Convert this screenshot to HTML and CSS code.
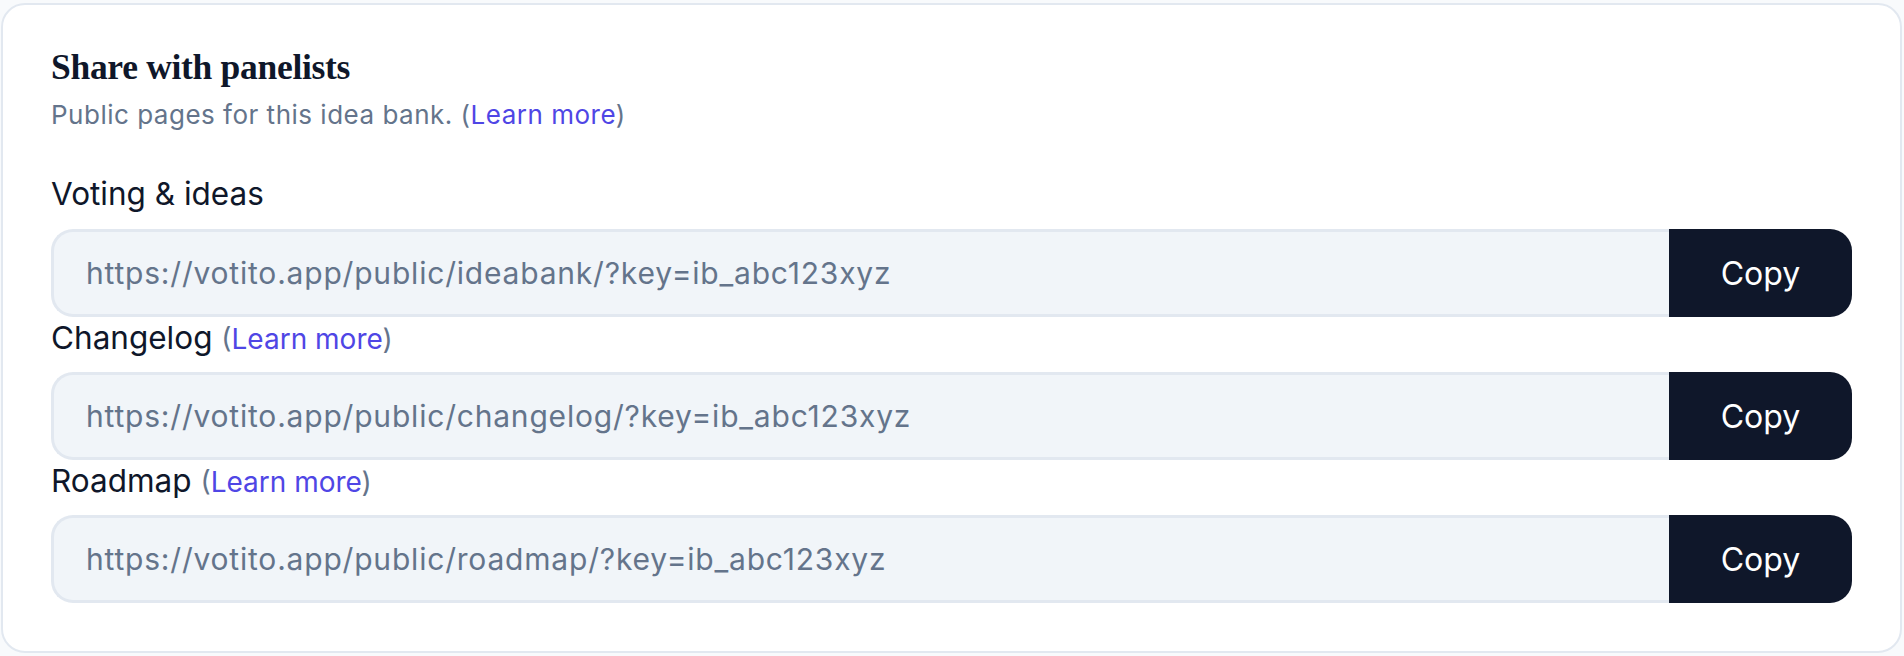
FILE: index.html
```html
<!DOCTYPE html>
<html lang="en">
<head>
    <meta charset="UTF-8">
    <meta name="viewport" content="width=device-width, initial-scale=1.0">
    <title>Share with panelists</title>
    <link rel="stylesheet" href="styles.css">
</head>
<body>
    <div class="page">
        <div class="card">
            <h2 class="card-title">Share with panelists</h2>
            <p class="card-sub">Public pages for this idea bank. (<a href="#">Learn more</a>)</p>

            <div class="field first">
                <div class="field-label">Voting &amp; ideas</div>
                <div class="copy-row">
                    <input class="copy-input" type="text" readonly value="https://votito.app/public/ideabank/?key=ib_abc123xyz">
                    <button class="copy-btn">Copy</button>
                </div>
            </div>

            <div class="field">
                <div class="field-label">Changelog <span class="paren">(<a href="#">Learn more</a>)</span></div>
                <div class="copy-row">
                    <input class="copy-input" type="text" readonly value="https://votito.app/public/changelog/?key=ib_abc123xyz">
                    <button class="copy-btn">Copy</button>
                </div>
            </div>

            <div class="field">
                <div class="field-label">Roadmap <span class="paren">(<a href="#">Learn more</a>)</span></div>
                <div class="copy-row">
                    <input class="copy-input" type="text" readonly value="https://votito.app/public/roadmap/?key=ib_abc123xyz">
                    <button class="copy-btn">Copy</button>
                </div>
            </div>
        </div>
    </div>
</body>
</html>
```

FILE: styles.css
```css
body {
    margin: 0;
    padding: 0;
    background: #f8fafc;
    font-family: 'Inter', 'Noto Sans', sans-serif;
    color: #0f172a;
}

.page {
    padding: 3px 2px 0 1px;
}

.card {
    background: #fff;
    border: 2px solid #e2e8f0;
    border-radius: 24px;
    padding: 42px 48px 48px;
}

.card-title {
    margin: 0;
    font-family: 'Liberation Serif', serif;
    font-weight: bold;
    font-size: 35.5px;
    line-height: 40px;
    letter-spacing: -0.3px;
    color: #0f172a;
}

.card-sub {
    margin: 12px 0 0;
    font-size: 26px;
    line-height: 32px;
    letter-spacing: 0.5px;
    color: #64748b;
}

a {
    color: #4f46e5;
    text-decoration: none;
}

.field {
    display: flex;
    flex-direction: column;
}

.field.first {
    margin-top: 42px;
}

.field-label {
    height: 40px;
    font-size: 31.5px;
    line-height: 40px;
    margin: 1px 0 14px;
    color: #0f172a;
    white-space: nowrap;
}

.field.first .field-label {
    margin-bottom: 15px;
}

.paren {
    font-size: 28px;
    line-height: 1;
    color: #64748b;
}

.copy-row {
    display: flex;
    height: 88px;
}

.copy-input {
    flex: 1;
    min-width: 0;
    box-sizing: border-box;
    height: 88px;
    margin: 0;
    padding: 0 32px;
    border: 3px solid #e2e8f0;
    border-right: none;
    border-radius: 22px 0 0 22px;
    background: #f1f5f9;
    font-family: inherit;
    font-size: 30px;
    letter-spacing: 0.8px;
    color: #64748b;
    outline: none;
}

.copy-btn {
    width: 183px;
    height: 88px;
    margin: 0;
    border: none;
    border-radius: 0 22px 22px 0;
    background: #0f172a;
    color: #fff;
    font-family: inherit;
    font-size: 32px;
    cursor: pointer;
}
```
